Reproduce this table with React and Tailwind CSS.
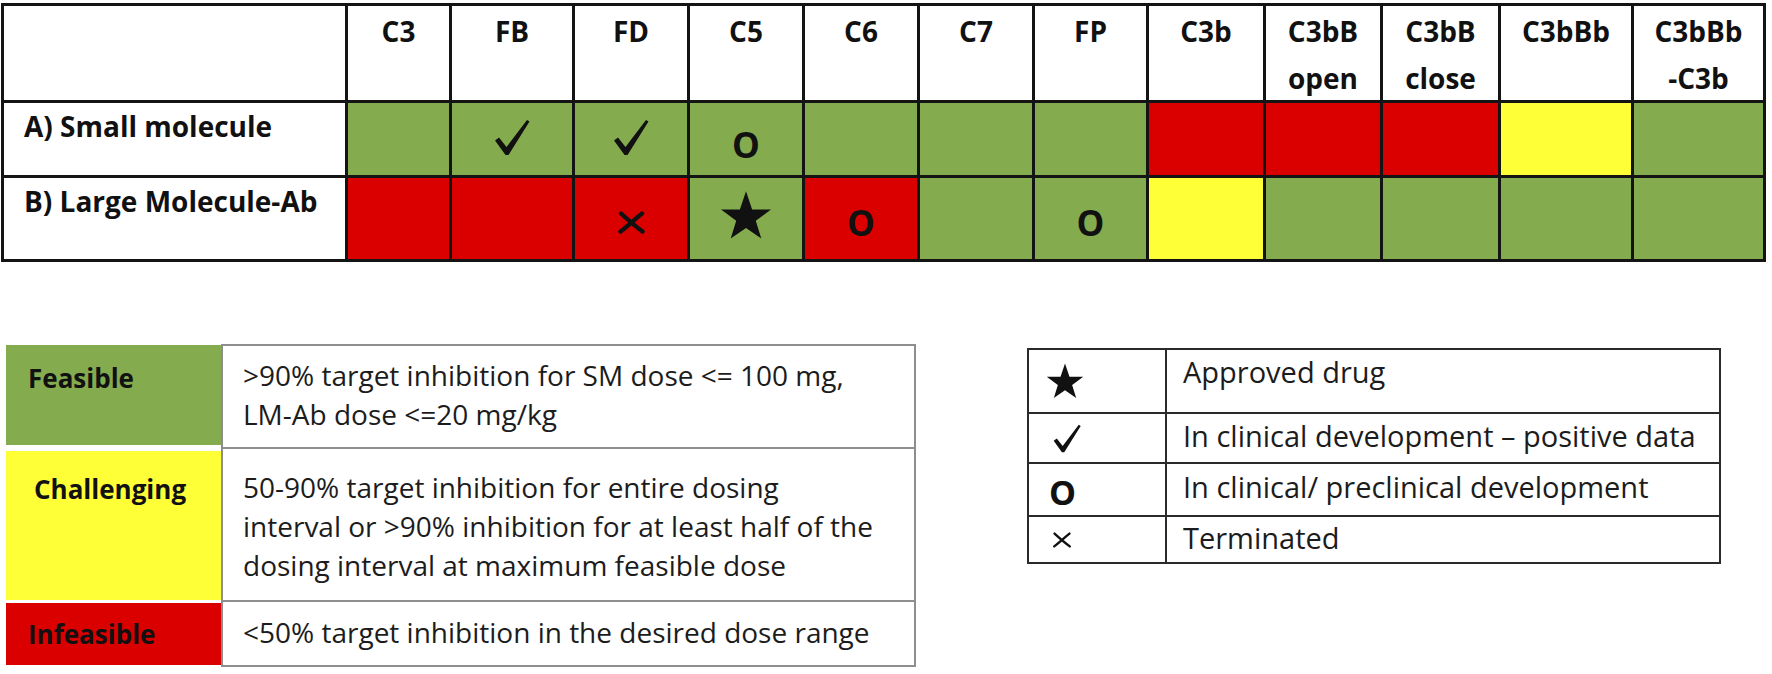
import React from "react";

const G = "bg-[#85ab4f]";
const R = "bg-[#da0000]";
const Y = "bg-[#ffff38]";

function Check({ w = 36, h = 37 }) {
  return (
    <svg width={w} height={h} viewBox="0 0 36 37">
      <path d="M1 21.5 L5 18.5 L12.5 28 L33 1 L35.5 2.5 L14.5 36 L11.5 36 Z" fill="#111" />
    </svg>
  );
}

function Star({ w = 52, h = 50 }) {
  return (
    <svg width={w} height={h} viewBox="0 0 100 95">
      <polygon
        points="50,0 61.8,35.1 98.1,35.1 68.8,56.8 79.4,91 50,70.6 20.6,91 31.2,56.8 1.9,35.1 38.2,35.1"
        fill="#111"
      />
    </svg>
  );
}

function Cross({ w = 31, h = 23, sw = 4.4 }) {
  return (
    <svg width={w} height={h} viewBox="0 0 31 23">
      <path d="M5 2.5 C11 8 19 15 26.5 20.5 M26 2.5 C19 8 12 15 4.5 20.5" stroke="#111" strokeWidth={sw} fill="none" strokeLinecap="round" />
    </svg>
  );
}

const headers = [
  ["C3"],
  ["FB"],
  ["FD"],
  ["C5"],
  ["C6"],
  ["C7"],
  ["FP"],
  ["C3b"],
  ["C3bB", "open"],
  ["C3bB", "close"],
  ["C3bBb"],
  ["C3bBb", "-C3b"],
];

const rowA = [
  [G, null],
  [G, "check"],
  [G, "check"],
  [G, "O"],
  [G, null],
  [G, null],
  [G, null],
  [R, null],
  [R, null],
  [R, null],
  [Y, null],
  [G, null],
];

const rowB = [
  [R, null],
  [R, null],
  [R, "x"],
  [G, "star"],
  [R, "O"],
  [G, null],
  [G, "O"],
  [Y, null],
  [G, null],
  [G, null],
  [G, null],
  [G, null],
];

function Sym({ s }) {
  if (s === "check") return <Check />;
  if (s === "star") return <Star />;
  if (s === "x") return <Cross />;
  if (s === "O")
    return <span className="text-[35px] leading-none font-bold text-[#111]">O</span>;
  return null;
}

function BodyCell({ c, row }) {
  const [bg, s] = c;
  let pad = "";
  if (row === "A" && s === "O") pad = "pt-[10px]";
  if (row === "A" && s === "check") pad = "pb-[4px]";
  if (row === "B" && (s === "O" || s === "x")) pad = "pt-[7px]";
  if (row === "B" && s === "star") pad = "pb-[5px]";
  return <div className={`${bg} flex items-center justify-center ${pad}`}>{s && <Sym s={s} />}</div>;
}

export default function App() {
  return (
    <div className="w-[1772px] h-[674px] bg-white overflow-hidden font-['Open_Sans',sans-serif] text-[#111]">
      {/* Top table */}
      <div className="ml-[1px] mt-[3px] w-[1765px] bg-[#141414] p-[3px] grid gap-[3px] grid-cols-[341px_101px_120px_112px_112px_112px_112px_111px_114px_114px_115px_130px_129px] grid-rows-[94px_72px_81px]">
        <div className="bg-white" />
        {headers.map((h, i) => (
          <div key={i} className="bg-white flex flex-col items-center pt-[2px] text-[28px] leading-[47px] font-bold">
            {h.map((t, j) => (
              <span key={j}>{t}</span>
            ))}
          </div>
        ))}
        <div className="bg-white pl-[20px] text-[28px] leading-[47px] font-bold">A) Small molecule</div>
        {rowA.map((c, i) => (
          <BodyCell key={i} c={c} row="A" />
        ))}
        <div className="bg-white pl-[20px] text-[28px] leading-[47px] font-bold">B) Large Molecule-Ab</div>
        {rowB.map((c, i) => (
          <BodyCell key={i} c={c} row="B" />
        ))}
      </div>

      {/* Legends */}
      <div className="flex items-start mt-[82px]">
        {/* Left legend */}
        <div className="flex ml-[6px]">
          <div className="w-[215px] flex flex-col text-[26px] leading-[40px] font-bold">
            <div className={`${G} mt-[1px] h-[100px] pt-[13px] pl-[22px]`}>Feasible</div>
            <div className={`${Y} mt-[6px] h-[149px] pt-[18px] pl-[28px]`}>Challenging</div>
            <div className={`${R} mt-[3px] h-[62px] pt-[11px] pl-[22px]`}>Infeasible</div>
          </div>
          <div className="w-[695px] flex flex-col border-2 border-[#8e8e8e] text-[28px] leading-[39px] text-[#1c1c1c]">
            <div className="h-[103px] border-b-2 border-[#8e8e8e] pt-[10px] pl-[20px]">
              <div>&gt;90% target inhibition for SM dose &lt;= 100 mg,</div>
              <div>LM-Ab dose &lt;=20 mg/kg</div>
            </div>
            <div className="h-[153px] border-b-2 border-[#8e8e8e] pt-[19px] pl-[20px]">
              <div>50-90% target inhibition for entire dosing</div>
              <div>interval or &gt;90% inhibition for at least half of the</div>
              <div>dosing interval at maximum feasible dose</div>
            </div>
            <div className="h-[63px] pt-[11px] pl-[20px]">
              <div>&lt;50% target inhibition in the desired dose range</div>
            </div>
          </div>
        </div>

        {/* Right legend */}
        <div className="ml-[111px] mt-[4px] bg-[#2a2a2a] p-[2px] grid gap-[2px] grid-cols-[136px_552px] grid-rows-[62px_48px_51px_45px] text-[29px] leading-[40px] text-[#1c1c1c]">
          <div className="bg-white flex items-center pl-[17px]">
            <Star w={38} h={37} />
          </div>
          <div className="bg-white pt-[2px] pl-[16px]">Approved drug</div>
          <div className="bg-white flex items-center pl-[23px]">
            <Check w={30} h={29} />
          </div>
          <div className="bg-white pt-[2px] pl-[16px]">In clinical development – positive data</div>
          <div className="bg-white flex items-center pl-[20px] pt-[4px]">
            <span className="text-[34px] leading-none font-bold text-[#111]">O</span>
          </div>
          <div className="bg-white pt-[3px] pl-[16px]">In clinical/ preclinical development</div>
          <div className="bg-white flex items-center pl-[22px]">
            <Cross w={22} h={20} sw={3.4} />
          </div>
          <div className="bg-white pt-[1px] pl-[16px]">Terminated</div>
        </div>
      </div>
    </div>
  );
}
